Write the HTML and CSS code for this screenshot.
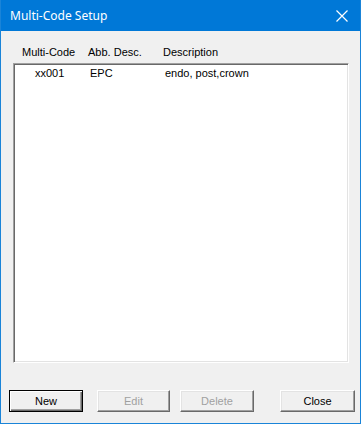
FILE: index.html
```html
<!DOCTYPE html>
<html>
<head>
<meta charset="utf-8">
<link rel="stylesheet" href="styles.css">
</head>
<body>
<div class="window">
  <div class="titlebar">
    <span class="title">Multi-Code Setup</span>
    <svg class="close-x" width="12" height="12" viewBox="0 0 12 12"><path d="M0.5 0.5 L11.5 11.5 M11.5 0.5 L0.5 11.5" stroke="#fff" stroke-width="1.2" fill="none"/></svg>
  </div>
  <div class="content">
    <div class="headers">
      <span class="h1">Multi-Code</span>
      <span class="h2">Abb. Desc.</span>
      <span class="h3">Description</span>
    </div>
    <div class="listbox">
      <div class="row">
        <span class="c1">xx001</span>
        <span class="c2">EPC</span>
        <span class="c3">endo, post,crown</span>
      </div>
    </div>
    <div class="buttons">
      <button class="btn default b-new">New</button>
      <button class="btn disabled b-edit">Edit</button>
      <button class="btn disabled b-del">Delete</button>
      <button class="btn b-close">Close</button>
    </div>
  </div>
</div>
</body>
</html>
```
FILE: styles.css
```css
html, body { margin: 0; padding: 0; }
body {
  width: 361px; height: 424px; overflow: hidden;
  font-family: "Liberation Sans", Arial, sans-serif;
  font-size: 11px; color: #000;
  background: #f0f0f0;
}
.window {
  box-sizing: border-box;
  width: 361px; height: 424px;
  border: 1px solid #1a84d8; border-top: none;
  display: flex; flex-direction: column;
  background: #f0f0f0;
}
.titlebar {
  height: 31px; background: #0078d7;
  display: flex; align-items: center; justify-content: space-between;
  padding: 0 12px 0 9px; flex: none;
}
.title { color: #fff; font-family: "Noto Sans", "Liberation Sans", sans-serif; font-size: 12px; letter-spacing: 0; }
.content { flex: 1; display: flex; flex-direction: column; }
.headers { display: flex; height: 14px; margin-top: 14px; padding-left: 21px; line-height: 14px; }
.h1 { width: 66px; }
.h2 { width: 75px; }
.listbox {
  box-sizing: border-box;
  margin: 4px 0 0 12px; width: 336px; height: 300px;
  background: #fff;
  border-top: 1px solid #a0a0a0; border-left: 1px solid #a0a0a0;
  border-right: 1px solid #fff; border-bottom: 1px solid #fff;
  box-shadow: inset 1px 1px 0 #696969, inset -1px -1px 0 #e3e3e3;
}
.row { display: flex; padding: 2px 0 0 21px; line-height: 14px; }
.c1 { width: 55px; }
.c2 { width: 75px; }
.buttons { display: flex; margin-top: 27px; padding-left: 8px; }
.btn {
  box-sizing: border-box; height: 22px; width: 74px;
  font-family: "Liberation Sans", Arial, sans-serif; font-size: 11px;
  background: #f0f0f0; color: #000; padding: 0;
  border-top: 1px solid #fff; border-left: 1px solid #fff;
  border-right: 1px solid #696969; border-bottom: 1px solid #696969;
  box-shadow: inset -1px -1px 0 #a0a0a0, inset 1px 1px 0 #e3e3e3;
}
.btn.default {
  border: 1px solid #000;
  box-shadow: inset 1px 1px 0 #fff, inset -1px -1px 0 #696969, inset -2px -2px 0 #a0a0a0;
}
.btn.disabled { color: #a0a0a0; }
.b-edit { margin-left: 14px; width: 73px; }
.b-del { margin-left: 10px; }
.b-close { margin-left: 26px; width: 75px; }
```
